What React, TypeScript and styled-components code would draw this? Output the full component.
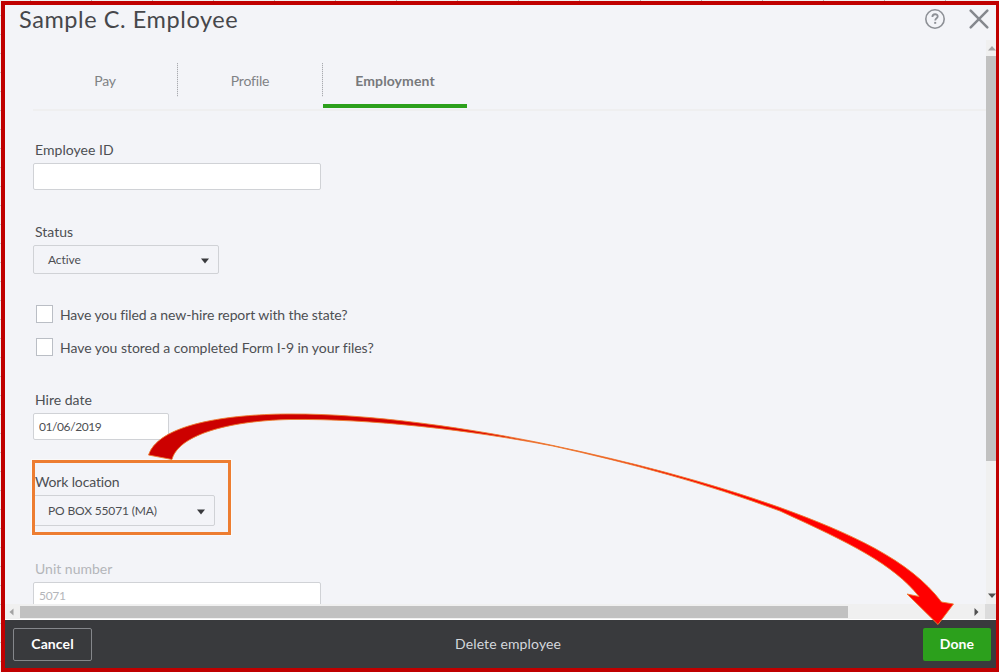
import React from "react";
import styled, { createGlobalStyle } from "styled-components";

const GlobalStyle = createGlobalStyle`
  *, *::before, *::after { box-sizing: border-box; }
  body { margin: 0; background: #fff; overflow: hidden; }
  button, input { font: inherit; margin: 0; }
`;

const Backdrop = styled.div`
  position: relative;
  width: 999px;
  height: 672px;
  padding: 1px 0 0 1px;
  overflow: hidden;
  font-family: Lato, "Open Sans", sans-serif;
  background:
    repeating-linear-gradient(90deg, transparent 0 30px, #b4b4b4 30px 31px, transparent 31px 61px) 0 0 / 100% 1px no-repeat,
    repeating-linear-gradient(180deg, transparent 0 15px, #c4c4c4 15px 16px, transparent 16px 19px) 0 0 / 1px 100% no-repeat,
    #f1f1f1;
`;

const Frame = styled.div`
  display: flex;
  flex-direction: column;
  width: 998px;
  height: 671px;
  border: solid #c00000;
  border-width: 4px 3px 4px 4px;
  background: #f3f4f8;
`;

const Header = styled.header`
  display: flex;
  flex: none;
  height: 35px;
  padding: 0 7px 0 14px;
  align-items: flex-start;
  justify-content: space-between;
`;

const Title = styled.h1`
  margin: 0;
  font-size: 23.5px;
  line-height: 28px;
  font-weight: 400;
  letter-spacing: 0.58px;
  color: #46474b;
`;

const HeaderIcons = styled.div`
  display: flex;
  gap: 23px;
  padding-top: 3px;
  svg { display: block; }
`;

const Body = styled.div`
  display: flex;
  flex: none;
  height: 564px;
`;

const Content = styled.main`
  flex: 1;
  height: 564px;
  padding-left: 28px;
  overflow: hidden;
`;

const TabBar = styled.nav`
  display: flex;
  height: 71px;
  padding-top: 18px;
  border-bottom: 2px solid #efeff0;
`;

const Tab = styled.div<{ $active?: boolean }>`
  display: flex;
  width: 144px;
  height: 50px;
  padding-bottom: 2px;
  align-items: center;
  justify-content: center;
  font-size: 14px;
  letter-spacing: ${(p) => (p.$active ? 0.1 : -0.2)}px;
  font-weight: ${(p) => (p.$active ? 700 : 400)};
  color: ${(p) => (p.$active ? "#77797c" : "#808285")};
  border-bottom: ${(p) => (p.$active ? "4px solid #2ca01c" : "4px solid transparent")};
`;

const Divider = styled.span`
  width: 1px;
  height: 34px;
  margin-top: 5px;
  background: repeating-linear-gradient(180deg, #a9abb0 0 1px, #e2e3e7 1px 2px);
`;

const Field = styled.div<{ $top: number; $muted?: boolean }>`
  display: flex;
  flex-direction: column;
  margin-top: ${(p) => p.$top}px;
  color: ${(p) => (p.$muted ? "#b4b6ba" : "#4d4f53")};
`;

const Label = styled.label<{ $space?: number }>`
  height: 22px;
  padding-left: 2px;
  font-size: 14px;
  line-height: 18px;
  letter-spacing: ${(p) => p.$space ?? 0}px;
`;

const Input = styled.input<{ $width: number; $space?: number }>`
  width: ${(p) => p.$width}px;
  height: 27px;
  padding: 0 5px 1px;
  border: 1px solid #d0d2d6;
  border-radius: 2px;
  outline: 0;
  background: #fff;
  font-size: 12px;
  letter-spacing: ${(p) => p.$space ?? 0}px;
  color: inherit;
`;

const Select = styled.div<{ $width: number; $height: number; $space: number }>`
  display: flex;
  width: ${(p) => p.$width}px;
  height: ${(p) => p.$height}px;
  padding: 0 9px 0 14px;
  align-items: center;
  justify-content: space-between;
  border: 1px solid #d0d2d6;
  border-radius: 2px;
  font-size: 12px;
  letter-spacing: ${(p) => p.$space}px;
  svg { margin-top: 2px; }
`;

const Checks = styled.div`
  display: flex;
  flex-direction: column;
  gap: 15px;
  margin-top: 31px;
  padding-left: 3px;
`;

const CheckRow = styled.label<{ $space: number }>`
  display: flex;
  height: 18px;
  gap: 7px;
  align-items: center;
  font-size: 14px;
  letter-spacing: ${(p) => p.$space}px;
  color: #4d4f53;
`;

const Box = styled.span`
  width: 17px;
  height: 18px;
  border: 1px solid #babec5;
  background: #fff;
`;

const VScroll = styled.div`
  display: flex;
  flex-direction: column;
  width: 10px;
  background: #f0f0f0;
`;

const VButton = styled.div<{ $height: number }>`
  display: flex;
  height: ${(p) => p.$height}px;
  padding-left: 2px;
  align-items: center;
  svg { display: block; flex: none; }
`;

const VThumb = styled.div`
  height: 405px;
  background: #c1c1c1;
`;

const VSpace = styled.div`
  flex: 1;
`;

const HScroll = styled.div`
  display: flex;
  flex: none;
  height: 16px;
  background: #f0f0f0;
  border-bottom: 1px solid #fff;
`;

const HButton = styled.div<{ $width: number; $pad: number }>`
  display: flex;
  width: ${(p) => p.$width}px;
  padding: 1px 0 0 ${(p) => p.$pad}px;
  align-items: center;
`;

const HThumb = styled.div`
  width: 828px;
  height: 12px;
  margin-top: 2px;
  background: #c1c1c1;
`;

const HSpace = styled.div`
  flex: 1;
`;

const Corner = styled.div`
  width: 11px;
  background: #dcdcdc;
`;

const Footer = styled.footer`
  display: grid;
  flex: 1;
  grid-template-columns: 450px 1fr auto;
  align-items: center;
  padding: 0 5px 0 8px;
  background: #393a3d;
`;

const Action = styled.button<{ $kind: "outline" | "link" | "primary" }>`
  height: 33px;
  width: ${(p) => (p.$kind === "outline" ? "79px" : p.$kind === "primary" ? "68px" : "auto")};
  padding: 0 0 2px;
  justify-self: start;
  border: ${(p) => (p.$kind === "outline" ? "1px solid #85878b" : "0")};
  border-radius: 2px;
  background: ${(p) => (p.$kind === "primary" ? "#2ca01c" : "transparent")};
  margin-left: ${(p) => (p.$kind === "link" ? -8 : 0)}px;
  font-size: 14px;
  font-weight: ${(p) => (p.$kind === "link" ? 400 : 700)};
  letter-spacing: ${(p) => (p.$kind === "link" ? 0.13 : 0.1)}px;
  color: ${(p) => (p.$kind === "link" ? "#d4d7dc" : "#fff")};
`;

const Highlight = styled.div`
  position: absolute;
  left: 32px;
  top: 460px;
  width: 199px;
  height: 75px;
  border: 3px solid #ed7d31;
  outline: 1px solid #faf9f8;
`;

const ArrowLayer = styled.svg`
  position: absolute;
  inset: 0;
  pointer-events: none;
`;

const Caret = () => (
  <svg width="8" height="6" viewBox="0 0 8 6">
    <path d="M0 .5h8L4 5.5z" fill="#393a3d" />
  </svg>
);

export default function App() {
  return (
    <Backdrop>
      <GlobalStyle />
      <Frame>
        <Header>
          <Title>Sample C. Employee</Title>
          <HeaderIcons>
            <svg width="22" height="22" viewBox="0 0 22 22" fill="none" stroke="#8d9096">
              <circle cx="11" cy="11" r="9.2" strokeWidth="1.6" />
              <path d="M8.4 9c0-3.7 5.4-3.5 5.3-.5 0 1.8-2.5 1.8-2.5 4" strokeWidth="1.8" />
              <path d="M11.2 13.9v1.9" strokeWidth="2" />
            </svg>
            <svg width="20" height="22" viewBox="0 0 20 22" fill="none" stroke="#85888e" strokeWidth="2.5" strokeLinecap="round">
              <path d="M1.7 2.7l16.6 16.6M18.3 2.7l-16.6 16.6" />
            </svg>
          </HeaderIcons>
        </Header>
        <Body>
          <Content>
            <TabBar>
              <Tab>Pay</Tab>
              <Divider />
              <Tab>Profile</Tab>
              <Divider />
              <Tab $active>Employment</Tab>
            </TabBar>
            <Field $top={30}>
              <Label htmlFor="employee-id" $space={0.05}>Employee ID</Label>
              <Input id="employee-id" $width={288} />
            </Field>
            <Field $top={33}>
              <Label>Status</Label>
              <Select $width={186} $height={29} $space={-0.1}>
                Active
                <Caret />
              </Select>
            </Field>
            <Checks>
              <CheckRow $space={-0.11}>
                <Box />
                Have you filed a new-hire report with the state?
              </CheckRow>
              <CheckRow $space={-0.04}>
                <Box />
                Have you stored a completed Form I-9 in your files?
              </CheckRow>
            </Checks>
            <Field $top={35}>
              <Label htmlFor="hire-date">Hire date</Label>
              <Input id="hire-date" $width={136} $space={-0.42} defaultValue="01/06/2019" />
            </Field>
            <Field $top={33}>
              <Label $space={-0.15}>Work location</Label>
              <Select $width={182} $height={31} $space={-0.15}>
                PO BOX 55071 (MA)
                <Caret />
              </Select>
            </Field>
            <Field $top={34} $muted>
              <Label htmlFor="unit">Unit number</Label>
              <Input id="unit" $width={288} $space={-0.3} defaultValue="5071" />
            </Field>
          </Content>
          <VScroll>
            <VButton $height={16}>
              <svg width="8" height="5" viewBox="0 0 8 5"><path d="M0 4.5h8L4 0z" fill="#a3a3a3" /></svg>
            </VButton>
            <VThumb />
            <VSpace />
            <VButton $height={18}>
              <svg width="8" height="5" viewBox="0 0 8 5"><path d="M0 .5h8L4 5z" fill="#505050" /></svg>
            </VButton>
          </VScroll>
        </Body>
        <HScroll>
          <HButton $width={15} $pad={4}>
            <svg width="5" height="8" viewBox="0 0 5 8"><path d="M4.5 .5v7L.5 4z" fill="#a3a3a3" /></svg>
          </HButton>
          <HThumb />
          <HSpace />
          <HButton $width={11} $pad={0}>
            <svg width="5" height="8" viewBox="0 0 5 8"><path d="M.5 0v8l4-4z" fill="#505050" /></svg>
          </HButton>
          <Corner />
        </HScroll>
        <Footer>
          <Action $kind="outline">Cancel</Action>
          <Action $kind="link">Delete employee</Action>
          <Action $kind="primary">Done</Action>
        </Footer>
      </Frame>
      <Highlight />
      <ArrowLayer width="999" height="672" viewBox="0 0 999 672">
        <defs>
          <linearGradient id="arrow-fill" gradientUnits="userSpaceOnUse" x1="330" y1="0" x2="720" y2="0">
            <stop offset="0" stopColor="#cc0000" />
            <stop offset="1" stopColor="#ff0000" />
          </linearGradient>
        </defs>
        <path
          d="M148.5 455C160 421 240 414 290 414C370 413.5 470 428 553 445.5C630 462 705 481 780 507.5C850 533 910 560 941.5 602L953.5 604L938 624.5L907 594L919 596.5C893 564 850 543 780 511C705 483 630 463 553 446C470 430 370 418.5 290 419.5C225 421 178 436 172 459.5Z"
          fill="url(#arrow-fill)"
          stroke="#ed7d31"
          strokeWidth="0.9"
        />
      </ArrowLayer>
    </Backdrop>
  );
}
